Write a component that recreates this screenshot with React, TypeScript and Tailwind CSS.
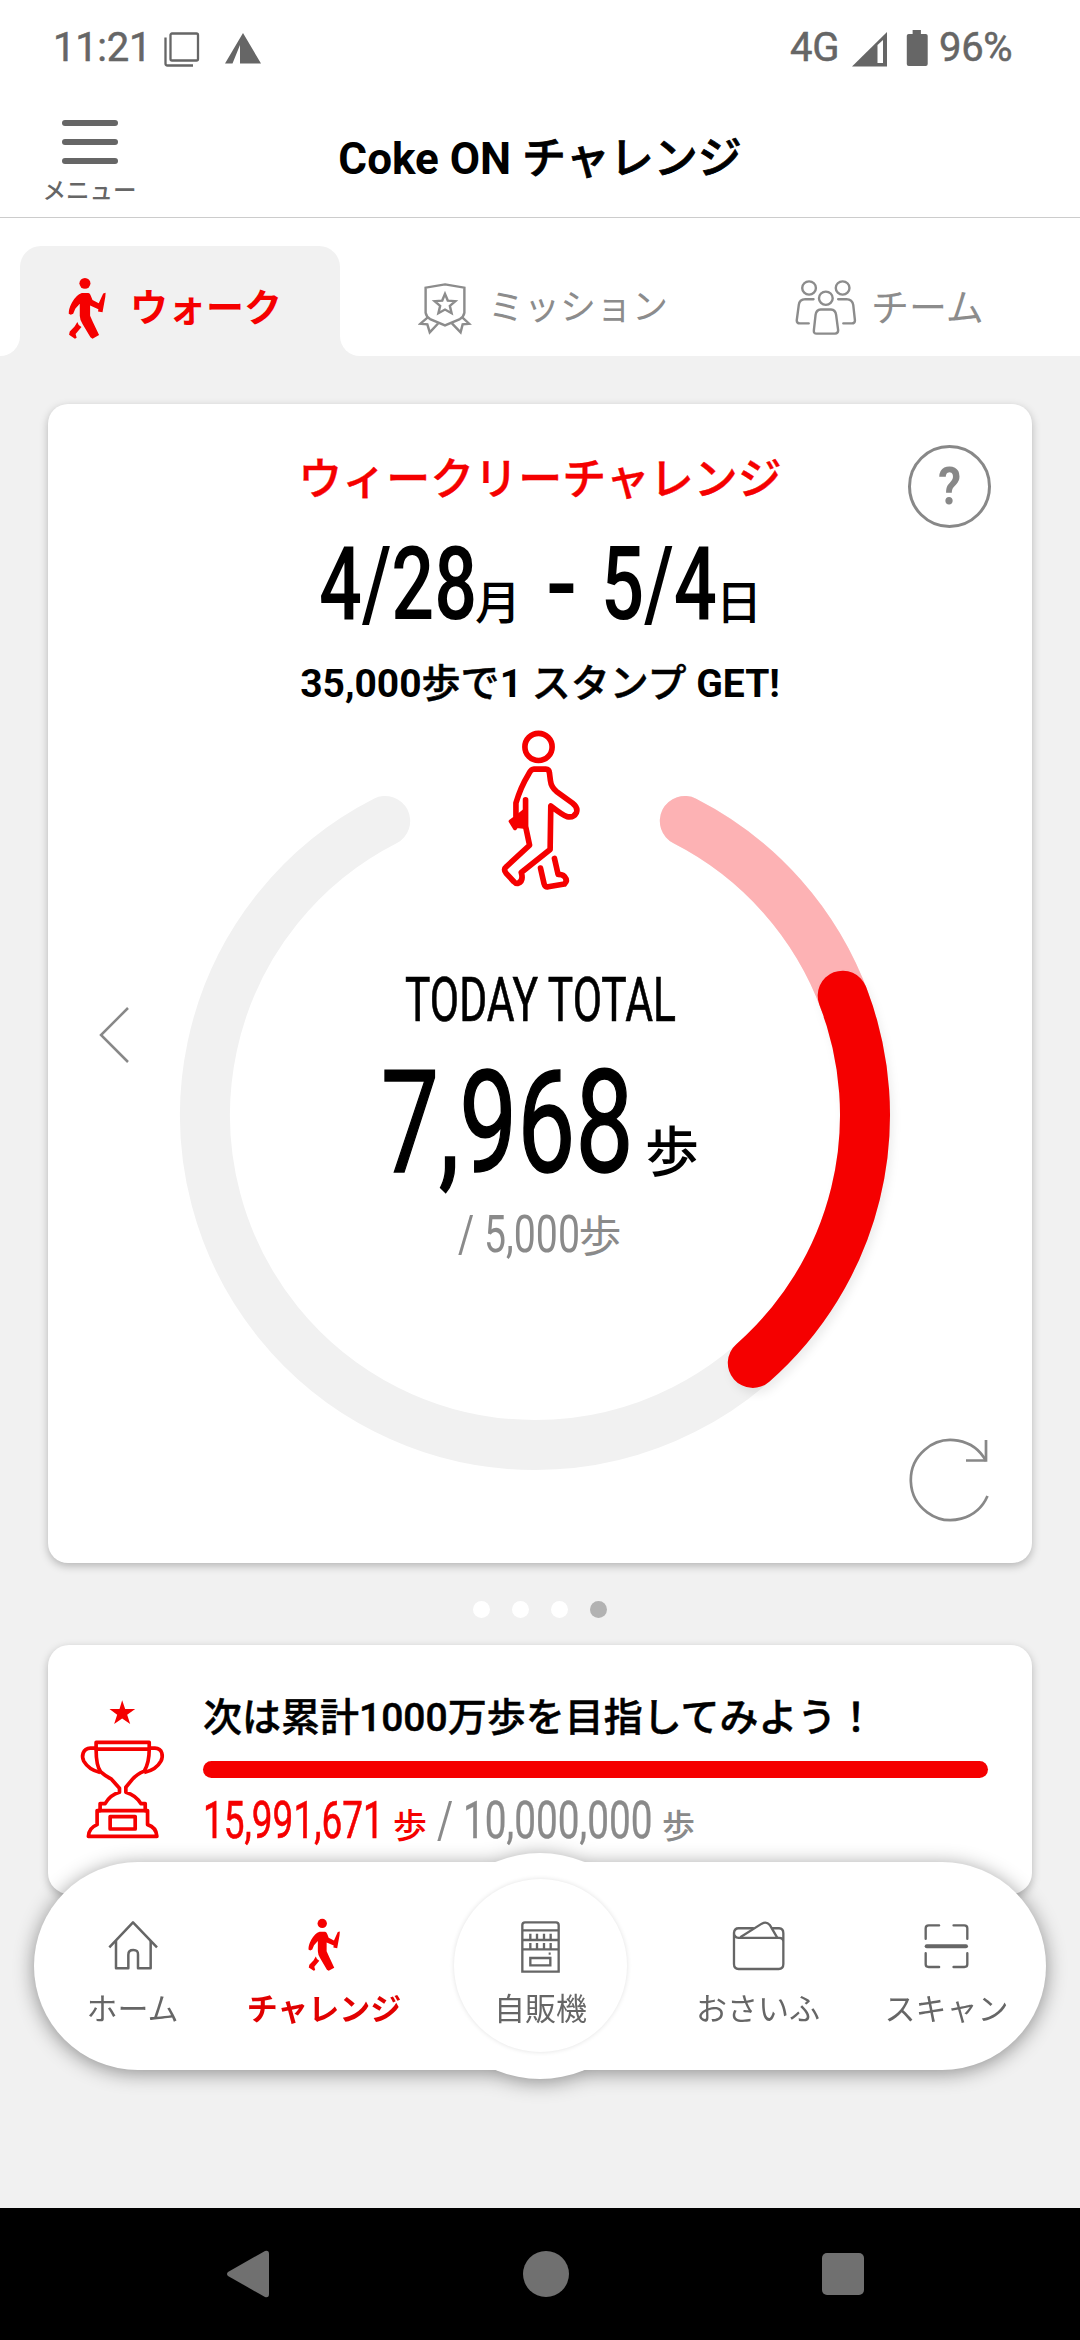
import React from 'react';
import clsx from 'clsx';

type IconProps = { className?: string };

const RING_CENTER = 355;
const RING_RADIUS = 330;

// 0deg is twelve o'clock, clockwise
function arc(from: number, to: number) {
  const point = (deg: number) => {
    const rad = (deg * Math.PI) / 180;
    const x = RING_CENTER + RING_RADIUS * Math.sin(rad);
    const y = RING_CENTER - RING_RADIUS * Math.cos(rad);
    return `${x.toFixed(2)} ${y.toFixed(2)}`;
  };
  const large = to - from > 180 ? 1 : 0;
  return `M${point(from)}A${RING_RADIUS} ${RING_RADIUS} 0 ${large} 1 ${point(to)}`;
}

// Narrow numerals: Roboto squeezed horizontally into a box of the given width
function Narrow({ box, squeeze, children }: { box: string; squeeze: string; children: React.ReactNode }) {
  return (
    <span className={clsx('inline-block whitespace-pre', box)}>
      <span className={clsx('inline-block origin-left whitespace-pre', squeeze)}>{children}</span>
    </span>
  );
}

function WalkIcon({ className }: IconProps) {
  return (
    <svg viewBox="195 830 116 188" preserveAspectRatio="none" className={className} fill="#f50000">
      <circle cx="247" cy="849" r="16" />
      <path d="M238 878H257Q262 879 264 886L269 899L287 908L300 879L307 877L306 890L298 935L285 933L286 926L262 915V946L270 964L288 1003L269 1014L263 1010L240 970Q232 957 232 946V910L219 925L213 940L206 943L200 940Q199 927 209 907Q222 883 238 878Z" />
      <path d="M225 964L229 973L237 979L220 1000L223 1011L218 1014L201 1002L203 993L217 978Z" />
    </svg>
  );
}

function BadgeIcon({ className }: IconProps) {
  return (
    <svg viewBox="1213 845 156 160" preserveAspectRatio="none" className={className} fill="none" stroke="#8c8c8c" strokeWidth="7">
      <path d="M1291 852L1347 862V938Q1345 950 1334 957L1291 976L1248 957Q1237 950 1235 938V862Z" />
      <path d="M1291 881L1299 901L1321 903L1305 917L1310 939L1291 928L1272 939L1277 917L1261 903L1283 901Z" />
      <path d="M1242 951L1220 971L1240 973L1247 997L1271 970M1340 951L1361 971L1342 973L1336 997L1311 970" />
    </svg>
  );
}

function TeamIcon({ className }: IconProps) {
  return (
    <svg viewBox="735 837 184 172" preserveAspectRatio="none" className={className} fill="none" stroke="#8c8c8c" strokeWidth="7" strokeLinecap="round" strokeLinejoin="round">
      <circle cx="779" cy="864" r="20" />
      <circle cx="877" cy="864" r="20" />
      <circle cx="828" cy="895" r="20" />
      <path d="M792 898H768Q751 899 749 915L743 962Q743 971 752 971H778" />
      <path d="M864 898H888Q905 899 908 915L913 962Q913 971 904 971H879" />
      <path d="M813 929H843Q856 930 858 945L864 992Q864 1002 855 1002H801Q792 1002 793 992L798 945Q800 930 813 929Z" />
    </svg>
  );
}

function WalkerOutline({ className }: IconProps) {
  return (
    <svg viewBox="120 55 250 495" className={className} fill="none" stroke="#f50000" strokeWidth="17" strokeLinecap="round" strokeLinejoin="round">
      <circle cx="236" cy="111" r="41" />
      <path d="M168 320V280Q182 232 206 193Q214 178 222 178H258Q268 178 269 190L272 213Q274 232 290 245L338 280Q356 294 350 309Q342 325 322 321Q312 319 273 289L271 420L184 489Q192 515 174 522Q167 523 162 517L138 491Q129 480 139 472L209 407L197 350V270" />
      <path d="M242 476L253 524Q255 534 265 532L314 524Q325 514 314 501Q308 495 295 495L284 447" />
      <path d="M176 318L194 303L198 352L170 349L165 356L152 335Z" fill="#f50000" strokeWidth="12" />
    </svg>
  );
}

function TrophyIcon({ className }: IconProps) {
  return (
    <svg viewBox="118 238 260 422" className={className} fill="none" stroke="#f50000" strokeWidth="11" strokeLinejoin="round">
      <path d="M247 242L256 268H286L262 285L271 313L247 296L223 313L232 285L209 268H239Z" fill="#f50000" stroke="none" />
      <path d="M169 368H328V388H169Z" />
      <path d="M169 388Q169 440 183 456Q195 467 215 478L239 505V517Q212 524 196 551H181V572H172V614Q147 624 146 649H351Q349 622 323 614V572H316V551H303Q288 526 258 517V502L278 478Q290 464 313 454Q328 430 328 388" />
      <path d="M167 385H152C128 386 125 410 132 424Q147 450 181 458M330 385H345C369 386 370 410 363 424Q349 450 313 458" />
      <path d="M175 572H321M211 590H286V627H211Z" />
    </svg>
  );
}

function HomeIcon({ className }: IconProps) {
  return (
    <svg viewBox="262 241 150 153" className={className} fill="none" stroke="#666" strokeWidth="7.500" strokeLinejoin="round">
      <path d="M266 323L337 248L409 323" />
      <path d="M286 304V386H323V345Q323 331 338 331T352 345V386H390V304" />
    </svg>
  );
}

function VendingIcon({ className }: IconProps) {
  return (
    <svg viewBox="0 0 117 156" className={className} fill="none" stroke="#666" strokeWidth="7">
      <path d="M4 152V12Q4 4 12 4H105Q113 4 113 12V152Z" />
      <path d="M4 28H113M4 57H113M4 85H113" />
      <path d="M28 38V57M48 38V57M69 38V57M89 38V57M28 66V85M48 66V85M69 66V85M89 66V85M83 98H89" />
      <path d="M28 111H88V133H28Z" />
    </svg>
  );
}

function WalletIcon({ className }: IconProps) {
  return (
    <svg viewBox="572 240 160 152" className={className} fill="none" stroke="#666" strokeWidth="7" strokeLinejoin="round">
      <path d="M578 278V372Q578 387 592 387H713Q727 387 727 372V305Q727 293 714 293H592Q578 291 578 278Q579 264 592 264H638M692 264H714Q727 265 727 279V308" />
      <path d="M597 291L662 250Q676 242 686 254L709 293" />
    </svg>
  );
}

function ScanIcon({ className }: IconProps) {
  return (
    <svg viewBox="1150 248 140 140" className={className} fill="none" stroke="#666" strokeWidth="7" strokeLinecap="round">
      <path d="M1158 295V264Q1158 255 1167 255H1198M1241 255H1273Q1282 255 1282 264V295M1158 338V371Q1158 379 1167 379H1198M1241 379H1273Q1282 379 1282 371V338" />
      <path d="M1161 317H1278" strokeWidth="12" />
    </svg>
  );
}

function StatusBar() {
  return (
    <div className="flex h-[96px] items-start pt-[25px] pl-[53px] text-[40px] leading-[46px] tracking-[-0.3px] text-[#666] [-webkit-text-stroke:0.5px_#666]">
      <span className="w-[111px]">11:21</span>
      <svg viewBox="0 0 36 36" className="mt-[7px] h-[36px] w-[36px]" fill="none" stroke="#666" strokeWidth="2.300">
        <rect x="6.500" y="1.500" width="27.500" height="27" rx="1.500" />
        <path d="M1.500 5.500V31.500Q1.500 33.500 3.500 33.500H29" />
      </svg>
      <svg viewBox="0 0 36 31" className="mt-[8px] ml-[25px] h-[31px] w-[36px]" fill="#666">
        <path d="M18 0L36 30.500H15V12L7.500 30.500H0Z" />
      </svg>
      <span className="ml-[529px] w-[62px]">4G</span>
      <svg viewBox="0 0 36 35" className="mt-[7px] h-[35px] w-[36px]">
        <path d="M0 34.500L35 0V34.500Z" fill="#666" />
        <path d="M25.500 13L31 8V31H25.500Z" fill="#fff" />
      </svg>
      <svg viewBox="0 0 22 37" className="mt-[5px] ml-[18px] h-[36px] w-[22px]" fill="#666">
        <path d="M6.500 0H15V4H20Q22 4 22 6V35Q22 37 20 37H2.500Q.5 37 .5 35V6Q.5 4 2.500 4H6.500Z" />
      </svg>
      <span className="ml-[11px]">96%</span>
    </div>
  );
}

function Header() {
  return (
    <header className="relative flex h-[122px] justify-center border-b border-[#ccc]">
      <div className="absolute top-[24px] left-[42px] flex w-[95px] flex-col items-center">
        <span className="h-[6px] w-[56px] rounded-full bg-[#666]" />
        <span className="mt-[13px] h-[6px] w-[56px] rounded-full bg-[#666]" />
        <span className="mt-[13px] h-[6px] w-[56px] rounded-full bg-[#666]" />
        <span className="mt-[12px] text-[23.500px] leading-[30px] font-medium whitespace-nowrap text-[#666]">メニュー</span>
      </div>
      <h1 className="pt-[33px] text-[44px] leading-[60px] font-bold">
        Coke ON <span className="font-medium [-webkit-text-stroke:0.8px_black]">チャレンジ</span>
      </h1>
    </header>
  );
}

function Tabs() {
  return (
    <div className="flex h-[138px] items-end bg-white text-[38px] leading-[48px] text-[#8c8c8c]">
      <div className="size-[20px] bg-[#f1f1f1]">
        <div className="size-[20px] rounded-br-[20px] bg-white" />
      </div>
      <div className="flex h-[110px] w-[320px] items-start rounded-t-[21px] bg-[#f1f1f1] pl-[47px] font-bold text-[#f50000]">
        <WalkIcon className="mt-[31px] h-[63px] w-[40px]" />
        <span className="mt-[38px] ml-[23px]">ウォーク</span>
      </div>
      <div className="size-[20px] bg-[#f1f1f1]">
        <div className="size-[20px] rounded-bl-[20px] bg-white" />
      </div>
      <div className="flex h-[110px] items-start pl-[58px]">
        <BadgeIcon className="mt-[36px] h-[53px] w-[54px]" />
        <span className="mt-[38px] ml-[16px] w-[306px] text-[36px]">ミッション</span>
        <TeamIcon className="mt-[33px] h-[57px] w-[63px]" />
        <span className="mt-[38px] ml-[14px]">チーム</span>
      </div>
    </div>
  );
}

function StepRing() {
  return (
    <div className="relative h-[710px] w-[710px]">
      <svg viewBox="0 0 710 710" className="h-[710px] w-[710px] overflow-visible" fill="none" strokeWidth="50" strokeLinecap="round">
        <path d={arc(27, 333)} stroke="#f1f1f1" />
        <path d={arc(27, 70)} stroke="#fdb2b4" />
        <path d={arc(68.800, 138.700)} stroke="#f50000" className="drop-shadow-[3px_6px_4px_rgba(0,0,0,0.07)]" />
      </svg>
      <WalkerOutline className="absolute top-[-32px] left-[320px] h-[165px] w-[83px]" />
      <div className="absolute inset-0 flex flex-col items-center">
        <div className="mt-[203px] flex h-[74px] pl-[10px] text-[62px] leading-[74px] [-webkit-text-stroke:0.7px_black]">
          <Narrow box="w-[270px]" squeeze="scale-x-[0.687]">TODAY TOTAL</Narrow>
        </div>
        <div className="mt-[14px] flex h-[144px] items-baseline pl-[10px] text-[143px] leading-[144px]">
          <Narrow box="w-[264px]" squeeze="scale-x-[0.722] [-webkit-text-stroke:1.6px_black]">7,968</Narrow>
          <span className="text-[54px] font-medium">歩</span>
        </div>
        <div className="mt-[10px] flex h-[60px] items-baseline pl-[9px] text-[51px] leading-[60px] text-[#8a8a8a]">
          <Narrow box="w-[121px]" squeeze="scale-x-[0.770]">/ 5,000</Narrow>
          <span className="text-[43px]">歩</span>
        </div>
      </div>
    </div>
  );
}

function WeeklyCard() {
  return (
    <section className="relative mx-[48px] mt-[48px] flex h-[1159px] flex-col items-center rounded-[20px] bg-white shadow-[0_3px_8px_rgba(0,0,0,0.25)]">
      <h2 className="mt-[48px] text-[44px] leading-[56px] font-medium text-[#f50000] [-webkit-text-stroke:0.4px_#f50000]">ウィークリーチャレンジ</h2>
      <div className="mt-[16px] flex h-[120px] items-baseline pl-[1px] text-[102px] leading-[120px] font-medium">
        <Narrow box="w-[156px]" squeeze="scale-x-[0.740]">4/28</Narrow>
        <span className="w-[71px] text-[46px]">月</span>
        <Narrow box="w-[55px]" squeeze="scale-x-[0.900]">-</Narrow>
        <Narrow box="w-[115px]" squeeze="scale-x-[0.745]">5/4</Narrow>
        <span className="text-[46px]">日</span>
      </div>
      <p className="mt-[12px] text-[39px] leading-[56px] font-bold">
        35,000<span className="font-medium [-webkit-text-stroke:0.5px_black]">歩で</span>1{' '}
        <span className="font-medium [-webkit-text-stroke:0.5px_black]">スタンプ</span> GET!
      </p>
      <div className="absolute top-[356px] left-[132px]">
        <StepRing />
      </div>
      <div className="absolute top-[41px] right-[41px] flex size-[83px] items-center justify-center rounded-full border-[3px] border-[#888] text-[51px] leading-none font-bold text-[#888]">
        <span className="scale-x-90">?</span>
      </div>
      <svg viewBox="0 0 30 56" className="absolute top-[603px] left-[51px] h-[56px] w-[30px]" fill="none" stroke="#888" strokeWidth="2.500">
        <path d="M29 1L2 28L29 55" />
      </svg>
      <svg viewBox="0 0 86 86" className="absolute right-[39px] bottom-[39px] size-[86px]" fill="none" stroke="#888" strokeWidth="2.700">
        <path d="M79 23A40 40 0 1 0 80.500 58" />
        <path d="M79 2V22.500H59" />
      </svg>
    </section>
  );
}

function Dots() {
  return (
    <div className="flex h-[82px] items-start justify-center gap-[22px] pt-[38px]">
      {[0, 1, 2, 3].map(i => (
        <span key={i} className={clsx('size-[17px] rounded-full', i === 3 ? 'bg-[#b2b2b2]' : 'bg-white')} />
      ))}
    </div>
  );
}

function TotalCard() {
  return (
    <section className="mx-[48px] flex h-[249px] rounded-[21px] bg-white shadow-[0_3px_8px_rgba(0,0,0,0.25)]">
      <TrophyIcon className="mt-[54px] ml-[31px] h-[141px] w-[87px]" />
      <div className="ml-[37px] w-[785px]">
        <p className="mt-[45px] text-[39px] leading-[56px] font-medium whitespace-nowrap [-webkit-text-stroke:0.5px_black]">
          次は累計1000万歩を目指してみよう！
        </p>
        <div className="mt-[15px] h-[17px] rounded-full bg-[#f50000]" />
        <div className="mt-[13px] flex h-[60px] items-baseline text-[51px] leading-[60px] text-[#8a8a8a]">
          <span className="flex items-baseline text-[#f50000]">
            <Narrow box="w-[190px]" squeeze="scale-x-[0.725] [-webkit-text-stroke:0.6px_#f50000]">15,991,671</Narrow>
            <span className="text-[34px] font-medium">歩</span>
          </span>
          <Narrow box="ml-[10px] w-[26px]" squeeze="scale-x-[0.770]">/</Narrow>
          <Narrow box="w-[199px]" squeeze="scale-x-[0.760] [-webkit-text-stroke:0.3px_#8a8a8a]">10,000,000</Narrow>
          <span className="text-[33px] font-medium">歩</span>
        </div>
      </div>
    </section>
  );
}

const navItems = [
  { label: 'ホーム', width: 'w-[197px]', icon: <HomeIcon className="mt-[58px] h-[51px] w-[50px]" /> },
  { label: 'チャレンジ', width: 'w-[186px]', active: true, icon: <WalkIcon className="mt-[56px] h-[54px] w-[34px]" /> },
  { label: '自販機', width: 'w-[247px]', icon: <VendingIcon className="mt-[59px] h-[52px] w-[39px]" /> },
  { label: 'おさいふ', width: 'w-[188px]', icon: <WalletIcon className="mt-[58px] h-[51px] w-[53px]" /> },
  { label: 'スキャン', width: 'w-[189px]', icon: <ScanIcon className="mt-[61px] h-[47px] w-[47px]" /> },
];

function BottomNav() {
  return (
    <nav className="absolute top-[1862px] left-[34px] h-[208px] w-[1012px] drop-shadow-[0_3px_10px_rgba(0,0,0,0.42)]">
      <div className="absolute inset-0 rounded-full bg-white" />
      <div className="absolute top-[-9px] left-[393px] size-[226px] rounded-full bg-white" />
      <div className="absolute top-[17px] left-[420px] size-[173px] rounded-full shadow-[0_0_5px_rgba(0,0,0,0.12)]" />
      <div className="relative flex text-[31px] leading-[40px] text-[#666]">
        {navItems.map(item => (
          <div key={item.label} className={clsx('relative flex h-[208px] flex-col items-center', item.width)}>
            {item.icon}
            <span className={clsx('absolute top-[128px] whitespace-nowrap', item.active && 'font-bold text-[#e10000]')}>{item.label}</span>
          </div>
        ))}
      </div>
    </nav>
  );
}

function SystemBar() {
  return (
    <div className="mt-auto flex h-[132px] items-center bg-black pl-[226px]">
      <svg viewBox="0 0 43 48" className="h-[48px] w-[43px]" fill="#707070">
        <path d="M39 1Q43 0 43 4V44Q43 48 39 47L2 26Q0 24 2 22Z" />
      </svg>
      <span className="ml-[254px] size-[46px] rounded-full bg-[#707070]" />
      <span className="ml-[253px] size-[42px] rounded-[5px] bg-[#707070]" />
    </div>
  );
}

export default function App() {
  return (
    <div className="relative flex h-[2340px] w-[1080px] flex-col overflow-hidden bg-[#f1f1f1] font-[Roboto,'Noto_Sans_CJK_JP',sans-serif] text-black">
      <div className="bg-white">
        <StatusBar />
        <Header />
        <Tabs />
      </div>
      <WeeklyCard />
      <Dots />
      <TotalCard />
      <BottomNav />
      <SystemBar />
    </div>
  );
}
